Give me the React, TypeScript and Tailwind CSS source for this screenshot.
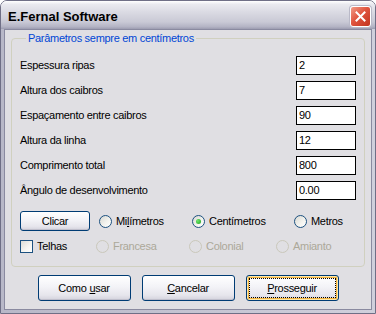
import type { ReactNode } from "react";

const FIELDS = [
  { label: "Espessura ripas", value: "2" },
  { label: "Altura dos caibros", value: "7" },
  { label: "Espaçamento entre caibros", value: "90" },
  { label: "Altura da linha", value: "12" },
  { label: "Comprimento total", value: "800" },
  { label: "Ângulo de desenvolvimento", value: "0.00" },
];

function Radio({ checked, disabled, children, w }: { checked?: boolean; disabled?: boolean; children: ReactNode; w: string }) {
  return (
    <div className={`flex items-center gap-[4px] shrink-0 ${w}`}>
      <span
        className={
          disabled
            ? "w-[13px] h-[13px] rounded-full border border-[#cac8bb] flex items-center justify-center"
            : "w-[13px] h-[13px] rounded-full border border-[#1c5180] bg-[linear-gradient(135deg,#d8d8d2_0%,#f4f4f0_60%,#ffffff_100%)] flex items-center justify-center"
        }
      >
        {checked && <span className="w-[5px] h-[5px] rounded-full bg-[radial-gradient(circle_at_35%_35%,#6be86b,#21a121)]" />}
      </span>
      <span className={disabled ? "text-[#aca899]" : "text-black"}>{children}</span>
    </div>
  );
}

function XpButton({ children, def, className }: { children: ReactNode; def?: boolean; className: string }) {
  return (
    <button
      className={
        "rounded-[3px] border border-[#003c74] bg-[linear-gradient(180deg,#ffffff_0%,#f3f3f7_45%,#e6e5ec_80%,#d3d2dc_100%)] text-black flex items-center justify-center " +
        (def
          ? "shadow-[inset_0_0_0_1px_#fde7a8,inset_0_0_0_2px_#f2b33d] outline-1 outline-dotted outline-black outline-offset-[-4px] "
          : "shadow-[inset_0_-1px_0_#c0bfcc] ") +
        className
      }
    >
      {children}
    </button>
  );
}

export default function App() {
  return (
    <div className="w-[376px] h-[314px] flex flex-col border border-[#6f6f86] rounded-t-[7px] overflow-hidden font-['Liberation_Sans',Arial,sans-serif] text-[11px] tracking-[-0.3px] leading-none">
      {/* barra de título */}
      <div className="h-[28px] shrink-0 flex items-center justify-between pl-[7px] pr-[4px] bg-[linear-gradient(180deg,#ffffff_0%,#e9e9ef_12%,#dadae3_40%,#c9c9d5_75%,#b3b3c4_92%,#9c9cb0_100%)]">
        <span className="font-bold text-[13px] tracking-normal text-black pt-[2px]">E.Fernal Software</span>
        <span className="w-[21px] h-[21px] mt-[3px] rounded-[3px] border border-white bg-[linear-gradient(135deg,#f19c88_0%,#e0553f_45%,#c2331f_100%)] flex items-center justify-center shadow-[0_0_0_1px_#b9b9c8]">
          <svg width="11" height="11" viewBox="0 0 11 11">
            <path d="M1.5 1.5 L9.5 9.5 M9.5 1.5 L1.5 9.5" stroke="white" strokeWidth="2" strokeLinecap="square" />
          </svg>
        </span>
      </div>

      {/* moldura */}
      <div className="flex-1 px-[3px] pb-[3px] bg-[linear-gradient(90deg,#b8b8c8,#d0d0dc)]">
        <div className="h-full border border-[#8a8aa0] bg-[#e0dfe3] flex flex-col px-[6px] pt-[3px]">
          <fieldset className="border border-[#d0d0bf] rounded-[4px] pl-[8px] pr-[8px] pt-[12px] h-[234px]">
            <legend className="ml-[6px] px-[2px] text-[#0046d5]">Parâmetros sempre em centímetros</legend>
            <div className="flex flex-col gap-[6px]">
              {FIELDS.map((f) => (
                <div key={f.label} className="flex items-center justify-between h-[19px]">
                  <span className="text-black">{f.label}</span>
                  <div className="w-[60px] h-[19px] border border-black bg-white flex items-center px-[2px]">
                    <span className="text-black">{f.value}</span>
                  </div>
                </div>
              ))}
            </div>

            <div className="flex items-center mt-[11px] h-[20px]">
              <XpButton className="w-[70px] h-[20px] mr-[9px]">Clicar</XpButton>
              <Radio w="w-[93px]">
                Mi<span className="underline">l</span>ímetros
              </Radio>
              <Radio w="w-[102px]" checked>
                Centímetros
              </Radio>
              <Radio w="w-[60px]">Metros</Radio>
            </div>

            <div className="flex items-center mt-[8px] h-[14px]">
              <div className="flex items-center gap-[4px] w-[76px] shrink-0">
                <span className="w-[13px] h-[13px] border border-[#1c5180] bg-[linear-gradient(135deg,#dcdcd6_0%,#f6f6f2_60%,#ffffff_100%)]" />
                <span className="text-black">Telhas</span>
              </div>
              <Radio w="w-[93px]" disabled>
                Francesa
              </Radio>
              <Radio w="w-[87px]" disabled>
                Colonial
              </Radio>
              <Radio w="w-[70px]" disabled>
                Amianto
              </Radio>
            </div>
          </fieldset>

          <div className="flex justify-center gap-[11px] mt-[8px]">
            <XpButton className="w-[93px] h-[26px]">
              Como <span className="underline ml-[3px]">u</span>sar
            </XpButton>
            <XpButton className="w-[93px] h-[26px]">
              <span className="underline">C</span>ancelar
            </XpButton>
            <XpButton className="w-[93px] h-[26px]" def>
              <span className="underline">P</span>rosseguir
            </XpButton>
          </div>
        </div>
      </div>
    </div>
  );
}
